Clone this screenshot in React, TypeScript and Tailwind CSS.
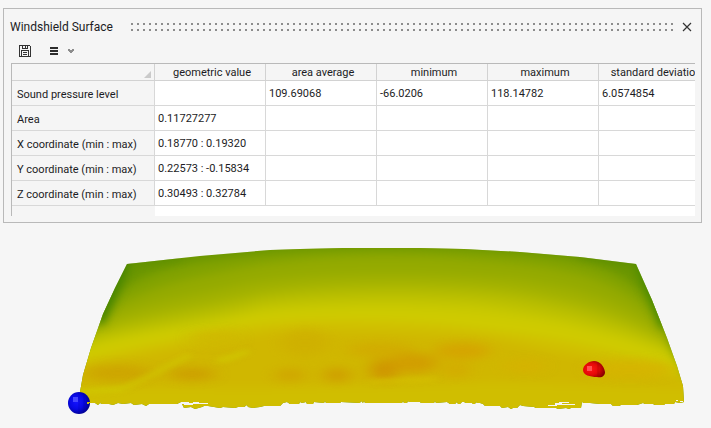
import { useState } from 'react';

const columns = ['geometric value', 'area average', 'minimum', 'maximum', 'standard deviation'];

const rows = [
  { label: 'Sound pressure level', values: ['', '109.69068', '-66.0206', '118.14782', '6.0574854'] },
  { label: 'Area', values: ['0.11727277', '', '', '', ''] },
  { label: 'X coordinate (min : max)', values: ['0.18770 : 0.19320', '', '', '', ''] },
  { label: 'Y coordinate (min : max)', values: ['0.22573 : -0.15834', '', '', '', ''] },
  { label: 'Z coordinate (min : max)', values: ['0.30493 : 0.32784', '', '', '', ''] },
];

// contour bands, from the top edge of the glass down
const bands = [
  { fill: '#82a200', d: 'M104 310 C124 276 170 264 240 256 C330 246 430 246 520 253 C590 260 630 268 662 316 L700 430 H60 Z' },
  { fill: '#94aa00', d: 'M100 318 C130 290 180 280 240 268 C330 252 430 254 520 264 C590 272 630 286 664 326 L700 430 H60 Z' },
  { fill: '#a0b000', d: 'M94 326 C130 302 190 296 250 282 C330 270 430 272 510 278 C580 286 630 302 666 334 L700 430 H60 Z' },
  { fill: '#aeb800', d: 'M88 334 C130 314 200 306 260 292 C330 281 430 281 500 288 C570 296 630 314 668 342 L700 430 H60 Z' },
  { fill: '#bcc000', d: 'M80 341 C130 322 200 316 260 300 C330 290 430 290 500 297 C570 306 630 324 672 348 L700 430 H60 Z' },
  { fill: '#c8c800', d: 'M80 347 C130 329 200 324 260 308 C320 300 430 299 490 306 C560 315 630 332 675 354 L700 430 H60 Z' },
  { fill: '#cfcb00', d: 'M70 352 C130 335 190 330 240 318 C290 308 430 308 490 316 C560 323 630 340 680 360 L700 430 H60 Z' },
  { fill: '#d0c000', d: 'M70 362 C130 348 190 338 225 328 C270 322 300 320 320 320 C380 320 430 322 490 330 C560 338 630 352 690 376 L700 430 H60 Z' },
  { fill: '#d0b700', d: 'M70 370 C130 356 190 346 230 340 L270 332 C320 328 430 334 490 338 C560 354 630 364 700 386 L700 430 H60 Z' },
  { fill: '#d0be00', d: 'M60 390 C130 386 200 388 260 388 C330 386 430 386 490 382 C560 384 630 386 700 388 L700 430 H60 Z' },
];

const patches = [
  { cx: 118, cy: 373, rx: 34, ry: 8, fill: '#cda200' },
  { cx: 192, cy: 374, rx: 24, ry: 6, fill: '#cc9a00' },
  { cx: 215, cy: 338, rx: 26, ry: 7, fill: '#cfb800' },
  { cx: 290, cy: 375, rx: 16, ry: 6, fill: '#d0a200' },
  { cx: 337, cy: 375, rx: 14, ry: 7, fill: '#cf9a00' },
  { cx: 305, cy: 343, rx: 24, ry: 13, fill: '#cfb000' },
  { cx: 384, cy: 370, rx: 14, ry: 11, fill: '#cf9000' },
  { cx: 414, cy: 363, rx: 24, ry: 10, fill: '#d29a00' },
  { cx: 380, cy: 350, rx: 34, ry: 7, fill: '#d2aa00' },
  { cx: 462, cy: 351, rx: 28, ry: 8, fill: '#d6a200' },
  { cx: 456, cy: 370, rx: 14, ry: 7, fill: '#d4aa00' },
  { cx: 524, cy: 366, rx: 22, ry: 6, fill: '#d6b200' },
  { cx: 630, cy: 369, rx: 44, ry: 9, fill: '#d6b400' },
];

const outline =
  'M127 264 L200 256 L270 250 L300 249 L343 248 H420 L464 249 L520 252 L580 257 L636 264 L652 300 L667 338 L677 366 L683 386 L684 402 ' +
  'L680 403 L675 402 L674 404 L665 404 L664 405 L655 405 L653 404 L645 404 L643 403 L637 405 L621 405 L619 406 L613 406 L611 404 L600 404 L590 403 L584 403 L582 402 L581 408 ' +
  'L571 408 L569 409 L566 408 L558 409 L556 408 L536 408 L534 407 L523 406 L520 405 L517 408 L513 408 L511 409 L508 407 L502 408 L500 406 L485 406 L483 404 L480 403 L477 403 ' +
  'L476 402 L475 404 L473 404 L472 403 L466 403 L464 402 L462 402 L460 404 L458 404 L457 402 L455 404 L450 404 L447 402 L436 403 L435 401 L434 403 L421 403 L420 402 L409 402 ' +
  'L408 401 L407 403 L404 403 L403 401 L402 403 L365 403 L364 401 L363 403 L361 401 L360 403 L341 402 L340 403 L326 403 L325 401 L324 403 L314 402 L313 404 L307 404 L306 402 ' +
  'L302 403 L300 402 L299 404 L290 404 L287 402 L283 403 L280 406 L264 406 L260 407 L253 408 L248 407 L247 405 L244 407 L238 407 L235 408 L223 407 L220 408 L208 406 L204 406 ' +
  'L202 407 L195 409 L191 407 L184 408 L182 404 L181 402 L177 404 L149 404 L146 406 L142 404 L134 405 L131 403 L123 404 L118 403 L113 405 L109 404 L102 404 L100 403 L98 405 ' +
  'L95 403 L85 403 L80 392 L83 375 L91 348 L103 314 L115 288 Z';

function SaveIcon() {
  return (
    <svg width="12" height="12" viewBox="0 0 12 12" fill="none" stroke="#333" shapeRendering="crispEdges">
      <path d="M.5 .5 H10.5 L11.5 1.5 V11.5 H.5 Z" />
      <path d="M3.5 .5 V3.5 H8.5 V.5 M6.5 1 V3" />
      <path d="M2.5 11 V5.5 H9.5 V11 M4 7.5 H8 M4 9.5 H8" />
    </svg>
  );
}

function WindshieldView() {
  return (
    <svg className="block w-full" viewBox="0 223 711 205" role="img" aria-label="Windshield surface pressure map">
      <defs>
        <clipPath id="glass">
          <path d={outline} shapeRendering="crispEdges" />
        </clipPath>
        <filter id="soft" filterUnits="userSpaceOnUse" x="0" y="200" width="760" height="260" colorInterpolationFilters="sRGB">
          <feGaussianBlur stdDeviation="5" />
        </filter>
        <filter id="spot" filterUnits="userSpaceOnUse" x="0" y="200" width="760" height="260" colorInterpolationFilters="sRGB">
          <feGaussianBlur stdDeviation="8 5" />
        </filter>
        <filter id="streak" filterUnits="userSpaceOnUse" x="0" y="200" width="760" height="260" colorInterpolationFilters="sRGB">
          <feGaussianBlur stdDeviation="4 2" />
        </filter>
        <radialGradient id="blue" cx="0.4" cy="0.45" r="0.65">
          <stop offset="0" stopColor="#1414ff" />
          <stop offset="0.5" stopColor="#0808e4" />
          <stop offset="1" stopColor="#000080" />
        </radialGradient>
        <radialGradient id="red" cx="0.35" cy="0.5" r="0.7">
          <stop offset="0" stopColor="#ff1414" />
          <stop offset="0.5" stopColor="#e40808" />
          <stop offset="1" stopColor="#800000" />
        </radialGradient>
      </defs>

      <g clipPath="url(#glass)">
        <rect x="60" y="230" width="640" height="190" fill="#6a9600" />
        <g filter="url(#soft)">
          {bands.map((band) => (
            <path key={band.fill} d={band.d} fill={band.fill} />
          ))}
        </g>
        <g filter="url(#spot)" opacity="0.85">
          {patches.map((p) => (
            <ellipse key={`${p.cx}-${p.cy}`} {...p} />
          ))}
        </g>
        <g filter="url(#soft)" fill="none">
          <path d="M126 258 L108 300 L98 322" stroke="#448400" strokeWidth="12" />
          <path d="M638 256 L656 300 L666 326" stroke="#488a00" strokeWidth="12" />
          <path d="M110 260 L180 254 M580 252 L650 262" stroke="#588c00" strokeWidth="8" />
        </g>
        <g filter="url(#streak)" fill="none" stroke="#d0c800" opacity="0.7">
          <path d="M122 389 L150 376 L170 365 L190 355" strokeWidth="5" />
          <path d="M218 361 L230 358 L248 351" strokeWidth="6" />
          <path d="M75 392 L124 389" strokeWidth="6" />
          <path d="M370 382 L436 379" strokeWidth="5" stroke="#d4c000" />
        </g>
      </g>
      <g fill="#f5f5f5" shapeRendering="crispEdges">
        <path d="M181 402 h8 v1 h4 v-1 h6 v1 h9 v1 h-15 v1 h-9 v-1 h-3 z" />
        <path d="M548 405 h7 v-2 h4 v-1 h10 v1 h-7 v1 h13 v1 h-18 v1 h-9 z" />
        <path d="M676 400 h2 v1 h-2 z M680 401 h3 v1 h-3 z" />
      </g>

      <circle cx="79" cy="403" r="11" fill="url(#blue)" />
      <path d="M73 397 h5 v5 h-5 z" fill="#4646ff" />
      <path d="M79 393 V413 M84 394 V412" stroke="#0000a0" opacity="0.3" />
      <path d="M87 402 h7 v1 h-5 v1 h-2 z" fill="#d2c000" />

      <path d="M583 370 C583 365 589 361 594 361 C600 361 604 366 605 372 C605 376 602 378 597 377 C590 377 583 375 583 370 Z" fill="url(#red)" />
      <path d="M587 366 h5 v5 h-5 z" fill="#ff5050" />
      <path d="M598 362 V377" stroke="#a00000" opacity="0.4" />
    </svg>
  );
}

export default function App() {
  const [open, setOpen] = useState(true);

  return (
    <main className="min-h-screen overflow-hidden bg-[#f6f6f6] font-['Roboto','Liberation_Sans',sans-serif] text-[#1c1c24]">
      {open && (
        <section className="mt-2 mr-[9px] ml-[3px] border border-[#b9b9b9] bg-[#f5f5f5] pr-1.5 pb-1.5 pl-[7px]">
          <header className="flex h-9 items-center">
            <h1 className="-ml-px w-[121px] shrink-0 text-[12px] whitespace-nowrap">Windshield Surface</h1>
            <svg className="h-2 min-w-0 flex-1" aria-hidden="true">
              <defs>
                <pattern id="grip" width="6" height="6" patternUnits="userSpaceOnUse">
                  <rect width="2" height="2" fill="#8c8c8c" />
                </pattern>
              </defs>
              <rect width="100%" height="8" fill="url(#grip)" />
            </svg>
            <button type="button" aria-label="Close" className="mr-0.5 ml-2 p-px" onClick={() => setOpen(false)}>
              <svg width="10" height="10" viewBox="0 0 10 10" stroke="#333" strokeWidth="1.2">
                <path d="M1 1 L9 9 M9 1 L1 9" />
              </svg>
            </button>
          </header>

          <div className="flex h-[18px] items-start pl-2">
            <button type="button" aria-label="Save">
              <SaveIcon />
            </button>
            <button type="button" aria-label="Options" className="ml-[19px] flex h-3 items-center gap-2.5">
              <svg width="8" height="8" viewBox="0 0 8 8" fill="#2c2c2c" shapeRendering="crispEdges">
                <path d="M0 0 h8 v2 h-8 z M0 3 h8 v2 h-8 z M0 6 h8 v2 h-8 z" />
              </svg>
              <svg width="6" height="4" viewBox="0 0 6 4" fill="#8c8c8c" shapeRendering="crispEdges">
                <path d="M0 0 h2 v1 h2 v-1 h2 v2 h-1 v1 h-1 v1 h-2 v-1 h-1 v-1 h-1 z" />
              </svg>
            </button>
          </div>

          <div className="overflow-hidden border-t border-l border-[#b9b9b9] bg-white">
            <table className="w-[698px] table-fixed border-separate border-spacing-0 text-left text-[11px] leading-[14px] whitespace-nowrap">
              <thead>
                <tr className="h-[17px] bg-[#f5f5f5]">
                  <td className="w-[143px] border-r border-b border-[#d2d2d2] p-0">
                    <svg className="mt-1 mr-[3px] ml-auto block" width="7" height="7" viewBox="0 0 7 7" fill="#cacaca">
                      <path d="M7 0 V7 H0 Z" />
                    </svg>
                  </td>
                  {columns.map((name) => (
                    <th key={name} scope="col" className="w-[111px] border-r border-b border-[#d2d2d2] p-0 pt-0.5 pl-1 text-center font-normal">
                      {name}
                    </th>
                  ))}
                </tr>
              </thead>
              <tbody>
                {rows.map((row) => (
                  <tr key={row.label} className="h-[25px]">
                    <th scope="row" className="border-r border-b border-[#d8d8d8] bg-[#f5f5f5] p-0 pt-1 pl-[5px] font-normal">
                      {row.label}
                    </th>
                    {row.values.map((value, i) => (
                      <td key={columns[i]} className="border-r border-b border-[#d8d8d8] p-0 pt-0.5 pl-[3px]">
                        {value}
                      </td>
                    ))}
                  </tr>
                ))}
                <tr className="h-2.5" aria-hidden="true">
                  <td className="bg-[#f5f5f5] p-0"></td>
                  <td className="p-0" colSpan={5}></td>
                </tr>
              </tbody>
            </table>
          </div>
        </section>
      )}
      <WindshieldView />
    </main>
  );
}
